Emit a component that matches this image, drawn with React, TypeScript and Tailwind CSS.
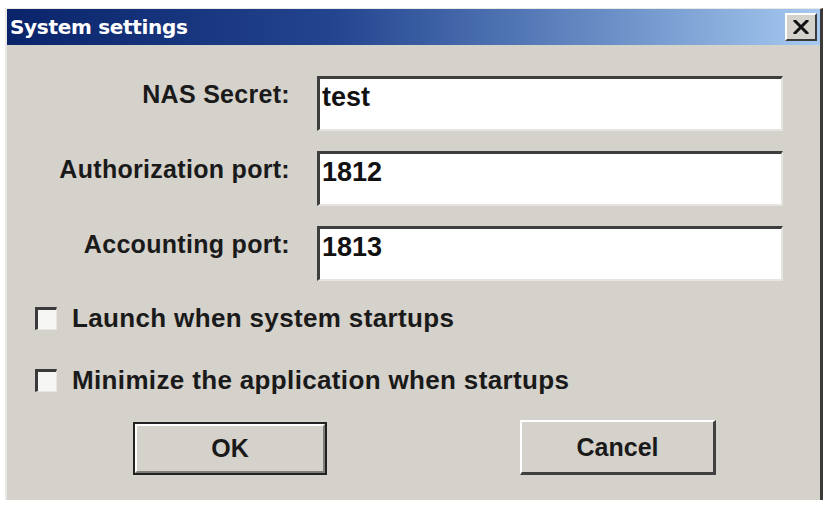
import React from "react";

const sans = { fontFamily: '"Liberation Sans", Arial, sans-serif' };

function Field({ label, value, first }: { label: string; value: string; first?: boolean }) {
  return (
    <div className={`flex items-start gap-[27px] ${first ? "" : "mt-[20px]"}`}>
      <div
        className="w-[283px] text-right text-[25px] leading-[25px] font-bold tracking-[0.3px] text-[#1a1a1a] pt-[6px]"
        style={sans}
      >
        {label}
      </div>
      <div className="w-[466px] h-[55px] bg-white border-t-[3px] border-l-[3px] border-t-[#3e3e3e] border-l-[#3e3e3e] border-b-[2px] border-r-[2px] border-b-[#e6e4e0] border-r-[#e6e4e0] pl-[2px] pt-[5px]">
        <div className="text-[27px] leading-[27px] font-bold text-[#111]" style={sans}>
          {value}
        </div>
      </div>
    </div>
  );
}

function Check({ label, className }: { label: string; className?: string }) {
  return (
    <div className={`flex items-center h-[24px] ${className ?? ""}`}>
      <div className="w-[22px] h-[23px] bg-[#f6f6f4] border-t-[3px] border-l-[3px] border-t-[#3a3a3a] border-l-[#3a3a3a] border-b border-r border-b-[#e8e6e2] border-r-[#e8e6e2]" />
      <div
        className="ml-[15px] text-[26px] leading-[26px] font-bold tracking-[0.35px] text-[#1a1a1a] whitespace-nowrap"
        style={sans}
      >
        {label}
      </div>
    </div>
  );
}

export default function App() {
  return (
    <div className="w-[829px] h-[506px] bg-white pt-[8px] pl-[5px] overflow-hidden">
      <div className="w-[818px] h-[492px] bg-[#d5d1cb] border-t border-t-[#ebe9e5] border-l-[2px] border-l-[#ebe9e5] border-r-[3px] border-r-[#3a3a3a] flex flex-col">
        {/* Title bar */}
        <div className="h-[36px] flex items-center justify-between bg-gradient-to-r from-[#0a246a] via-[#23448f] via-40% to-[#a6caf0] pl-[3px] pr-[3px]">
          <div
            className="text-white text-[20px] font-bold tracking-[-0.3px]"
            style={{ fontFamily: '"DejaVu Sans", Verdana, sans-serif' }}
          >
            System settings
          </div>
          <div className="w-[32px] h-[28px] bg-[#d5d1cb] border-t-[2px] border-l-[2px] border-t-white border-l-white border-b-[2px] border-r-[2px] border-b-[#3a3a3a] border-r-[#3a3a3a] flex items-center justify-center">
            <svg width="16" height="14" viewBox="0 0 16 14">
              <path d="M2 1 L14 13 M14 1 L2 13" stroke="#111" strokeWidth="3" strokeLinecap="square" />
            </svg>
          </div>
        </div>

        {/* Fields */}
        <div className="pt-[31px]">
          <Field label="NAS Secret:" value="test" first />
          <Field label="Authorization port:" value="1812" />
          <Field label="Accounting port:" value="1813" />
        </div>

        {/* Checkboxes */}
        <div className="pl-[28px] mt-[25px]">
          <Check label="Launch when system startups" />
          <Check label="Minimize the application when startups" className="mt-[38px]" />
        </div>

        {/* Buttons */}
        <div className="flex pl-[126px] mt-[28px] items-start">
          <div className="w-[194px] h-[53px] border-[2px] border-[#222] flex items-center justify-center mt-[2px]">
            <div className="w-full h-full border-t-[2px] border-l-[2px] border-t-white border-l-white border-b-[2px] border-r-[2px] border-b-[#807e7a] border-r-[#807e7a] flex items-center justify-center">
              <span className="text-[25px] leading-[25px] font-bold text-[#1a1a1a]" style={sans}>
                OK
              </span>
            </div>
          </div>
          <div className="ml-[193px] w-[196px] h-[55px] border-t-[2px] border-l-[2px] border-t-white border-l-white border-b-[3px] border-r-[3px] border-b-[#404040] border-r-[#404040] flex items-center justify-center">
            <span className="text-[25px] leading-[25px] font-bold text-[#1a1a1a]" style={sans}>
              Cancel
            </span>
          </div>
        </div>
      </div>
    </div>
  );
}
